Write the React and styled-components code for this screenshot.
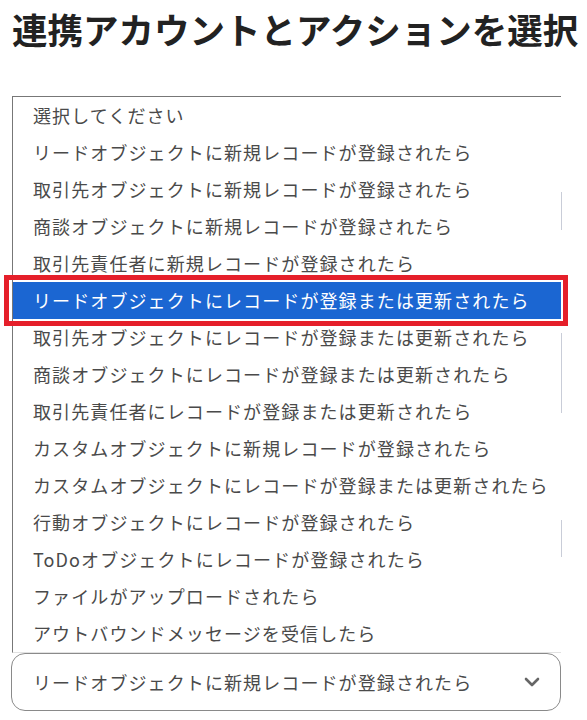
import React from 'react';
import styled, { createGlobalStyle } from 'styled-components';

const GlobalStyle = createGlobalStyle`
	body {
		margin: 0;
		background: #fff;
		font-family: 'Noto Sans CJK JP', 'Noto Sans', sans-serif;
	}
`;

const options = [
	'選択してください',
	'リードオブジェクトに新規レコードが登録されたら',
	'取引先オブジェクトに新規レコードが登録されたら',
	'商談オブジェクトに新規レコードが登録されたら',
	'取引先責任者に新規レコードが登録されたら',
	'リードオブジェクトにレコードが登録または更新されたら',
	'取引先オブジェクトにレコードが登録または更新されたら',
	'商談オブジェクトにレコードが登録または更新されたら',
	'取引先責任者にレコードが登録または更新されたら',
	'カスタムオブジェクトに新規レコードが登録されたら',
	'カスタムオブジェクトにレコードが登録または更新されたら',
	'行動オブジェクトにレコードが登録されたら',
	'ToDoオブジェクトにレコードが登録されたら',
	'ファイルがアップロードされたら',
	'アウトバウンドメッセージを受信したら',
];

// faint edges of the field behind the open list
const ghostLines = [
	{ top: 95, height: 38 },
	{ top: 236, height: 80 },
	{ top: 423, height: 37 },
];

const App = () => {
	const selected = 5;

	return (
		<>
			<GlobalStyle />
			<Page>
				<Title>連携アカウントとアクションを選択</Title>
				<ListBox>
					{options.map((label, i) => (
						<Option key={label} $active={i === selected}>
							{label}
						</Option>
					))}
					{ghostLines.map((g) => (
						<GhostEdge key={g.top} style={{ top: g.top, height: g.height }} />
					))}
				</ListBox>
				<Select>
					<SelectText>リードオブジェクトに新規レコードが登録されたら</SelectText>
					<Chevron viewBox="0 0 16 10" aria-hidden="true">
						<path d="M2 2 L8 8 L14 2" />
					</Chevron>
				</Select>
			</Page>
		</>
	);
};

export default App;

const Page = styled.div`
	width: 587px;
	height: 720px;
	overflow: hidden;
	padding: 11px 0 0 12px;
	box-sizing: border-box;
`;

const Title = styled.h1`
	margin: 0;
	font-size: 35.5px;
	line-height: 36px;
	font-weight: 700;
	color: #222;
	white-space: nowrap;
`;

const ListBox = styled.div`
	position: relative;
	margin-top: 49px;
	width: 548px;
	border-top: 1px solid #777;
	border-left: 1px solid #777;
	border-bottom: 1px solid #e2e2e2;
	display: flex;
	flex-direction: column;
`;

const Option = styled.div`
	position: relative;
	height: 37px;
	line-height: 37px;
	padding-left: 20px;
	font-size: 18px;
	letter-spacing: 1.1px;
	white-space: nowrap;
	color: ${(p) => (p.$active ? '#fff' : '#4a4a4a')};
	background: ${(p) => (p.$active ? '#1b66d2' : 'transparent')};

	${(p) =>
		p.$active &&
		`
		&::after {
			content: '';
			position: absolute;
			top: -7px;
			bottom: -7px;
			left: -9px;
			right: -7px;
			border: 5px solid #e51f2a;
			pointer-events: none;
		}
	`}
`;

const GhostEdge = styled.div`
	position: absolute;
	right: -1px;
	width: 1px;
	background: #c9cdd8;
`;

const Select = styled.div`
	display: flex;
	align-items: center;
	justify-content: space-between;
	width: 550px;
	height: 58px;
	margin-left: -1px;
	box-sizing: border-box;
	border: 1px solid #8a8a8a;
	border-radius: 14px;
	padding: 0 20px 0 21px;
`;

const SelectText = styled.span`
	font-size: 18px;
	letter-spacing: 1.1px;
	color: #4a4a4a;
	white-space: nowrap;
`;

const Chevron = styled.svg`
	width: 16px;
	height: 10px;
	fill: none;
	stroke: #666;
	stroke-width: 2.6;
	stroke-linecap: round;
	stroke-linejoin: round;
`;
